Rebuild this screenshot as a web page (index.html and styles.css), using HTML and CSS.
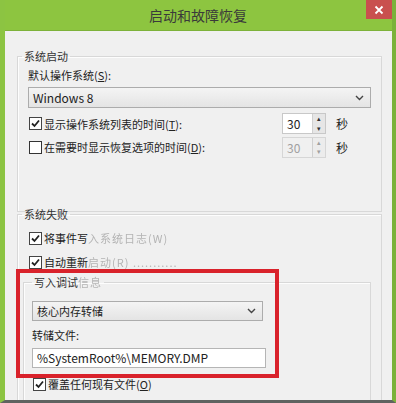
FILE: index.html
```html
<!DOCTYPE html>
<html lang="zh-CN">
<head>
    <meta charset="UTF-8">
    <title>启动和故障恢复</title>
    <link rel="stylesheet" href="styles.css">
</head>
<body>
    <div class="window">
        <div class="titlebar">
            <span class="title">启动和故障恢复</span>
            <span class="close">
                <svg width="10" height="10" viewBox="0 0 10 10"><path d="M1.5 1.5 L8.5 8.5 M8.5 1.5 L1.5 8.5" stroke="#fff" stroke-width="1.8"/></svg>
            </span>
        </div>

        <div class="content">
            <!-- 系统启动 -->
            <fieldset class="group group-start">
                <legend>系统启动</legend>
                <div class="label first">默认操作系统(<u>S</u>):</div>
                <div class="select wide">
                    <span>Windows 8</span>
                    <svg class="arrow" width="9" height="6" viewBox="0 0 9 6"><path d="M1 1 L4.5 4.5 L8 1" fill="none" stroke="#444" stroke-width="1.4"/></svg>
                </div>
                <div class="row row-1">
                    <label class="check"><span class="box on"><svg width="11" height="11" viewBox="0 0 11 11"><path d="M2 5.5 L4.5 8 L9 2.5" fill="none" stroke="#222" stroke-width="1.8"/></svg></span>显示操作系统列表的时间(<u>T</u>):</label>
                    <div class="timer">
                        <div class="spin">
                            <span class="spin-value">30</span>
                            <span class="spin-btns"><i>&#9652;</i><i>&#9662;</i></span>
                        </div>
                        <span>秒</span>
                    </div>
                </div>
                <div class="row row-2">
                    <label class="check"><span class="box"></span>在需要时显示恢复选项的时间(<u>D</u>):</label>
                    <div class="timer">
                        <div class="spin disabled">
                            <span class="spin-value">30</span>
                            <span class="spin-btns"><i>&#9652;</i><i>&#9662;</i></span>
                        </div>
                        <span>秒</span>
                    </div>
                </div>
            </fieldset>

            <!-- 系统失败 -->
            <fieldset class="group group-fail">
                <legend>系统失败</legend>
                <div class="row fail-row">
                    <label class="check"><span class="box on"><svg width="11" height="11" viewBox="0 0 11 11"><path d="M2 5.5 L4.5 8 L9 2.5" fill="none" stroke="#222" stroke-width="1.8"/></svg></span>将事件写<span class="smear">入系统日志(W)</span></label>
                </div>
                <div class="row fail-row">
                    <label class="check"><span class="box on"><svg width="11" height="11" viewBox="0 0 11 11"><path d="M2 5.5 L4.5 8 L9 2.5" fill="none" stroke="#222" stroke-width="1.8"/></svg></span>自动重新<span class="smear">启动(R) ...........</span></label>
                </div>

                <fieldset class="group group-debug">
                    <legend>写入调试<span class="smear">信息</span></legend>
                    <div class="select dump">
                        <span>核心内存转储</span>
                        <svg class="arrow" width="9" height="6" viewBox="0 0 9 6"><path d="M1 1 L4.5 4.5 L8 1" fill="none" stroke="#444" stroke-width="1.4"/></svg>
                    </div>
                    <div class="label">转储文件:</div>
                    <div class="textbox">%SystemRoot%\MEMORY.DMP</div>
                    <div class="row over-row">
                        <label class="check"><span class="box on"><svg width="11" height="11" viewBox="0 0 11 11"><path d="M2 5.5 L4.5 8 L9 2.5" fill="none" stroke="#222" stroke-width="1.8"/></svg></span>覆盖任何现有文件(<u>O</u>)</label>
                    </div>
                </fieldset>
            </fieldset>
        </div>

        <!-- 红框标注 -->
        <div class="highlight"></div>
    </div>
</body>
</html>
```

FILE: styles.css
```css
body {
    margin: 0;
    font-family: "Noto Sans CJK SC", sans-serif;
    font-size: 11px;
    color: #222;
}

.window {
    position: relative;
    width: 396px;
    height: 403px;
    box-sizing: border-box;
    background-color: #f0f0f0;
    border-left: 5px solid #8cc442;
    border-right: 4px solid #7bb23a;
    border-bottom: 3px solid #5f6360;
    overflow: hidden;
}

.titlebar {
    height: 30px;
    background-color: #8dc540;
    border-bottom: 1px solid #7db23a;
    display: flex;
    justify-content: center;
    align-items: center;
    margin-left: -5px;
    margin-right: -4px;
}

.title {
    font-size: 14px;
    color: #3a3a3a;
}

.close {
    position: absolute;
    top: 0;
    right: 0;
    width: 26px;
    height: 19px;
    background-color: #c9504e;
    display: flex;
    justify-content: center;
    align-items: center;
}

.content {
    padding: 18px 10px 0 12px;
}

.group {
    margin: 0;
    border: 1px solid #d8d8d8;
    box-shadow: inset 1px 1px 0 #fdfdfd;
    padding: 0 10px;
    min-width: 0;
}

.group legend {
    padding: 0 2px;
    margin-left: -6px;
    line-height: 14px;
    color: #333;
}

.group-start {
    height: 157px;
    padding-top: 4px;
}

.label {
    line-height: 16px;
}

.select {
    display: flex;
    justify-content: space-between;
    align-items: center;
    box-sizing: border-box;
    border: 1px solid #acacac;
    background: linear-gradient(#f4f4f4, #e4e4e4);
    padding: 0 6px 0 4px;
}

.select.wide {
    height: 21px;
    margin-top: 4px;
    font-size: 12px;
}

.row {
    display: flex;
    justify-content: space-between;
    align-items: center;
}

.row-1 {
    margin-top: 5px;
    height: 21px;
}

.row-2 {
    margin-top: 2px;
    height: 22px;
}

.check {
    display: flex;
    align-items: center;
    margin-left: 1px;
}

.box {
    width: 11px;
    height: 11px;
    border: 1px solid #333;
    background-color: #fff;
    margin-right: 2px;
    display: flex;
}

.box.on {
    border-color: #444;
}

.timer {
    width: 89px;
    display: flex;
    align-items: center;
    gap: 10px;
    font-size: 12px;
}

.spin {
    width: 44px;
    height: 21px;
    box-sizing: border-box;
    border: 1px solid #c8c8c8;
    background-color: #fff;
    display: flex;
}

.spin-value {
    flex: 1;
    padding-left: 4px;
    line-height: 19px;
    font-size: 12px;
}

.spin-btns {
    width: 12px;
    display: flex;
    flex-direction: column;
    background-color: #e6e6e6;
    border-left: 1px solid #d0d0d0;
}

.spin-btns i {
    flex: 1;
    font-style: normal;
    font-size: 7px;
    line-height: 9px;
    text-align: center;
    color: #333;
}

.spin.disabled {
    background-color: #f0f0f0;
    border-color: #d6d6d6;
}

.spin.disabled .spin-value,
.spin.disabled .spin-btns i {
    color: #a0a0a0;
}

.spin.disabled .spin-btns {
    background-color: #ececec;
}

.group-fail {
    margin-top: -5px;
    padding-top: 5px;
    height: 300px;
}

.fail-row {
    height: 24px;
}

.smear {
    color: #b4b4b4;
    filter: blur(0.6px);
    letter-spacing: 1px;
}

.group-debug {
    margin: 1px 0 0 -5px;
    padding: 12px 5px 0 8px;
    height: 200px;
}

.group-debug legend {
    margin-left: 0;
}

.select.dump {
    width: 231px;
    height: 20px;
}

.group-debug .label {
    margin-top: 6px;
}

.textbox {
    width: 234px;
    height: 20px;
    box-sizing: border-box;
    margin-top: 5px;
    border: 1px solid #b5b5b5;
    background-color: #fff;
    padding-left: 4px;
    line-height: 18px;
    font-size: 12px;
}

.over-row {
    margin-top: 8px;
    height: 16px;
    justify-content: flex-start;
}

.highlight {
    position: absolute;
    left: 11px;
    top: 269px;
    width: 255px;
    height: 101px;
    border: 4px solid #d9222b;
}
```
